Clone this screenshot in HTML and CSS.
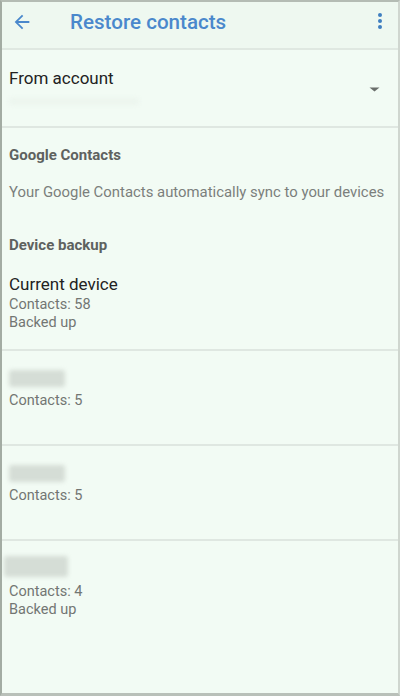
FILE: index.html
```html
<!DOCTYPE html>
<html lang="en">
<head>
    <meta charset="UTF-8">
    <meta name="viewport" content="width=device-width, initial-scale=1.0">
    <title>Restore contacts</title>
    <link rel="stylesheet" href="styles.css">
</head>
<body>
    <div class="screen">
        <header class="toolbar">
            <svg class="back" width="22" height="22" viewBox="0 0 24 24">
                <path d="M20 11H7.8l5.6-5.6L12 4l-8 8 8 8 1.4-1.4L7.8 13H20z" fill="#4a88cc"/>
            </svg>
            <h1 class="title">Restore contacts</h1>
            <svg class="more" width="6" height="18" viewBox="0 0 6 18">
                <circle cx="3" cy="3" r="2" fill="#3f7fc0"/>
                <circle cx="3" cy="9" r="2" fill="#3f7fc0"/>
                <circle cx="3" cy="15" r="2" fill="#3f7fc0"/>
            </svg>
        </header>

        <div class="account">
            <div class="account-label">From account</div>
            <div class="account-value">
                <span class="blur blur-wide"></span>
                <svg class="caret" width="11" height="5" viewBox="0 0 11 5">
                    <path d="M0.5 0.5h10L5.5 4.5z" fill="#6a6e6b"/>
                </svg>
            </div>
        </div>

        <section class="info">
            <h2 class="subhead">Google Contacts</h2>
            <p class="note">Your Google Contacts automatically sync to your devices</p>
            <h2 class="subhead subhead-device">Device backup</h2>
        </section>

        <div class="backup first">
            <div class="name">Current device</div>
            <div class="meta">Contacts: 58</div>
            <div class="meta">Backed up</div>
        </div>

        <div class="backup">
            <span class="blur"></span>
            <div class="meta">Contacts: 5</div>
        </div>

        <div class="backup">
            <span class="blur"></span>
            <div class="meta">Contacts: 5</div>
        </div>

        <div class="backup last">
            <span class="blur blur-tall"></span>
            <div class="meta">Contacts: 4</div>
            <div class="meta">Backed up</div>
        </div>
    </div>
</body>
</html>
```

FILE: styles.css
```css
*{
    box-sizing: border-box;
}

body{
    margin: 0;
    font-family: Roboto, "Liberation Sans", sans-serif;
    background-color: #f1faf3;
}

.screen{
    width: 400px;
    height: 696px;
    border-top: 2px solid #b4bcb4;
    border-left: 2px solid #a3aca3;
    border-right: 2px solid #cfd6cf;
    border-bottom: 3px solid #b9c0b9;
    background-color: #f2fbf4;
    display: flex;
    flex-direction: column;
    overflow: hidden;
}

.toolbar{
    height: 48px;
    display: flex;
    align-items: center;
    padding: 0 0 0 9px;
    background-color: #eef8f0;
    border-bottom: 2px solid #dfe8e1;
    flex-shrink: 0;
}

.back{
    margin-top: -7px;
}

.title{
    margin: -7px 0 0 37px;
    font-size: 20.6px;
    font-weight: 500;
    color: #4a88cc;
    flex: 1;
}

.more{
    margin: -8px 15px 0 0;
}

.account{
    height: 78px;
    padding: 18px 0 0 7px;
    border-bottom: 2px solid #dfe7e1;
    flex-shrink: 0;
}

.account-label{
    font-size: 17px;
    line-height: 20px;
    color: #222;
}

.account-value{
    display: flex;
    align-items: center;
    justify-content: space-between;
    margin-top: 4px;
    padding-right: 18px;
}

.caret{
    margin-top: -18px;
}

.blur{
    display: block;
    width: 56px;
    height: 17px;
    border-radius: 3px;
    background-color: #d5ddd6;
    filter: blur(2px);
}

.blur-wide{
    width: 130px;
    height: 7px;
    margin-top: 6px;
    background-color: #ecf5ee;
}

.blur-tall{
    width: 64px;
    height: 21px;
    margin-left: -5px;
}

.info{
    padding: 0 0 0 7px;
    flex-shrink: 0;
}

.subhead{
    margin: 18px 0 0;
    font-size: 15px;
    line-height: 18px;
    font-weight: 700;
    color: #5e625f;
}

.note{
    margin: 19px 0 0;
    font-size: 14.9px;
    line-height: 18px;
    color: #7b7f7c;
}

.subhead-device{
    margin-top: 35px;
}

.backup{
    height: 95px;
    padding: 19px 0 0 7px;
    border-bottom: 2px solid #dfe7e1;
    flex-shrink: 0;
}

.backup.first{
    height: 97px;
    padding-top: 20px;
}

.backup.last{
    border-bottom: none;
    padding-top: 15px;
}

.backup.last .blur + .meta{
    margin-top: 6px;
}

.name{
    font-size: 17px;
    line-height: 20px;
    color: #222;
    margin-bottom: 2px;
}

.meta{
    font-size: 14.5px;
    line-height: 18px;
    color: #727673;
}

.blur + .meta{
    margin-top: 5px;
}
```
